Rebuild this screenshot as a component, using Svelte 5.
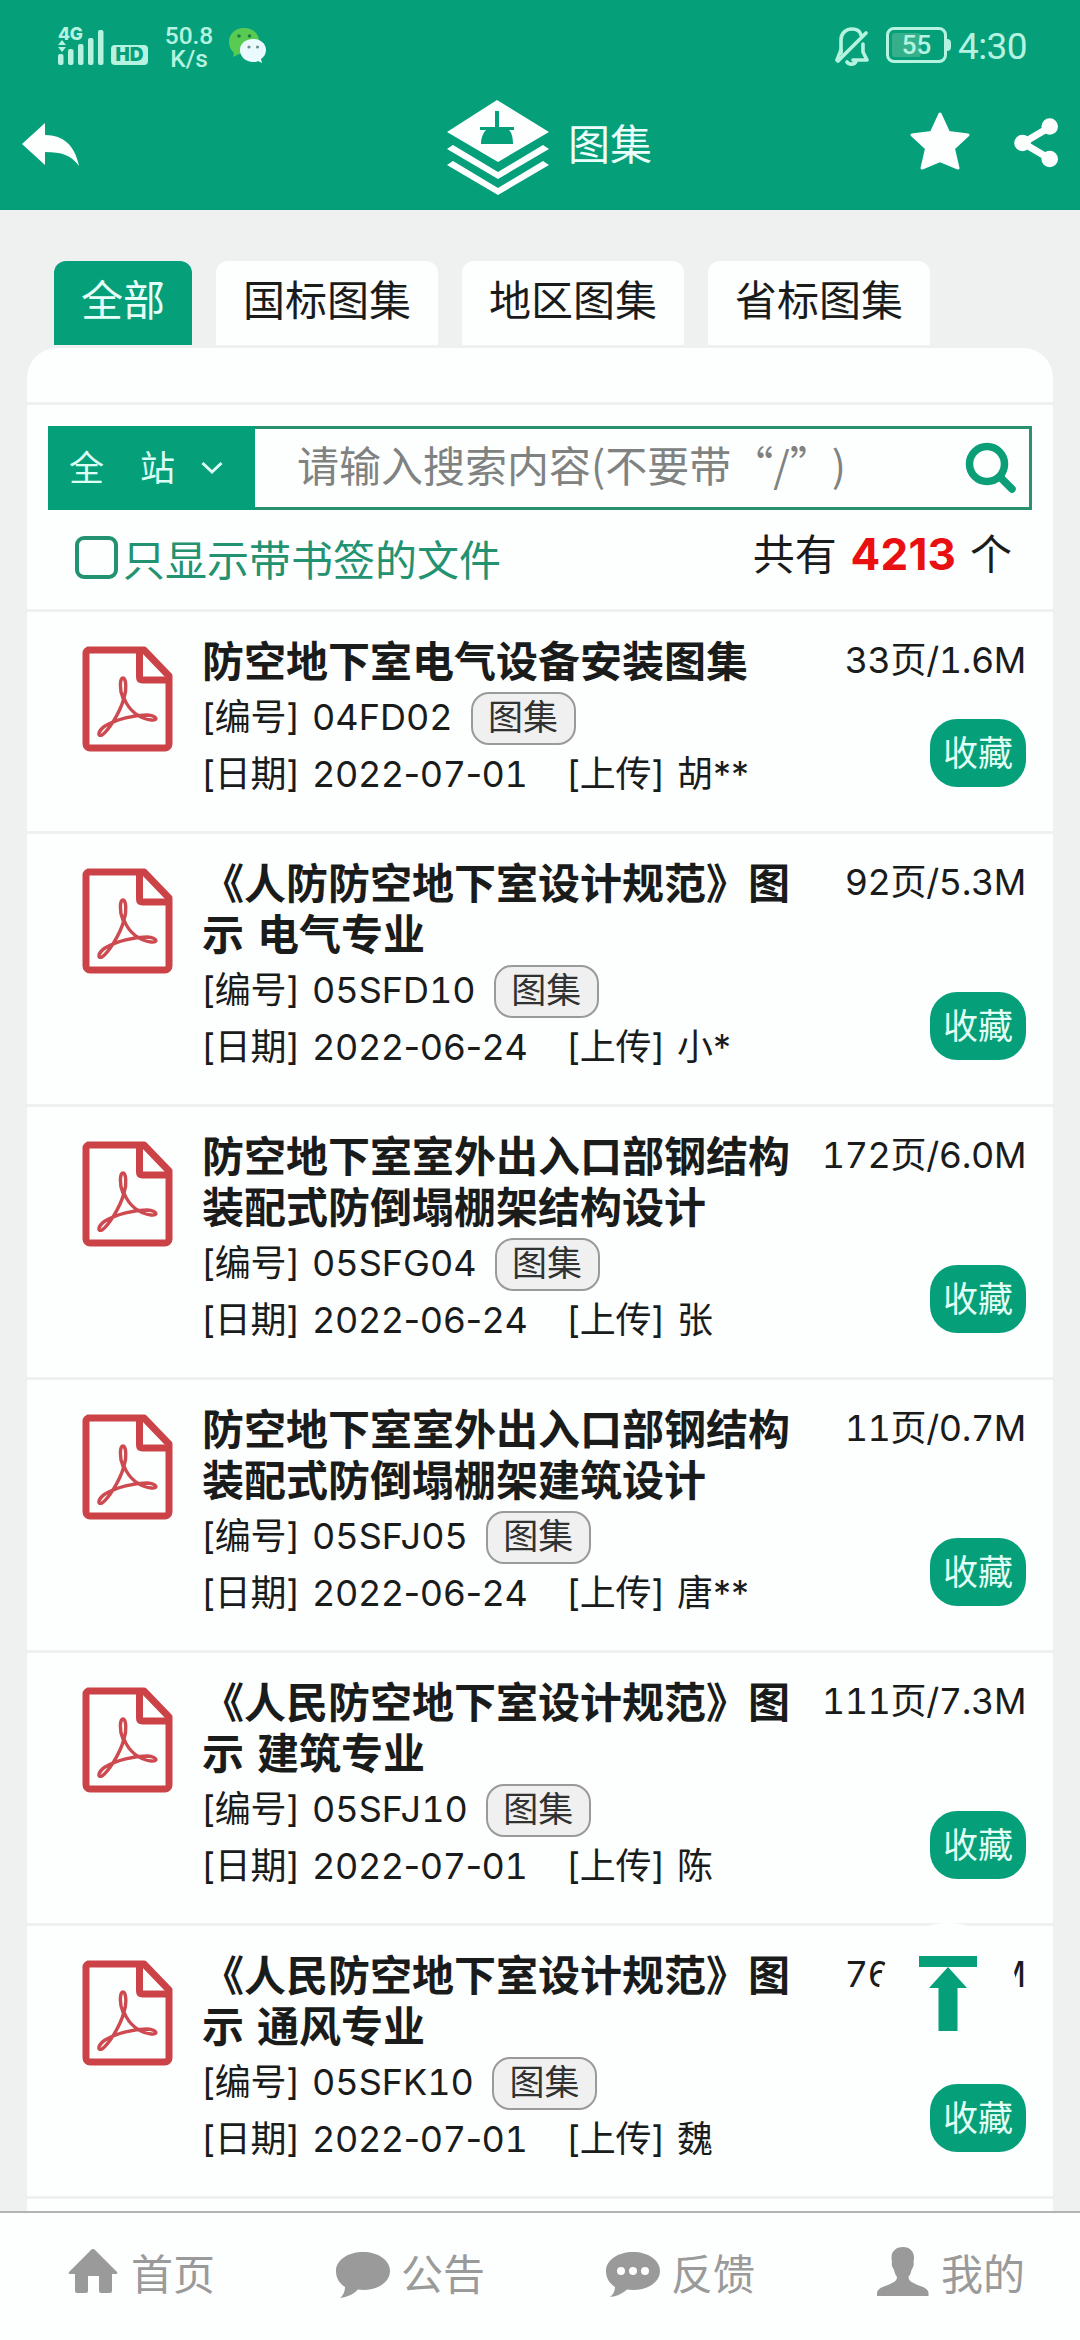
<script>
  const tabs = ['全部', '国标图集', '地区图集', '省标图集'];
  const docs = [
    { title: '防空地下室电气设备安装图集', code: '04FD02', date: '2022-07-01', by: '胡**', meta: '33页/1.6M' },
    { title: '《人防防空地下室设计规范》图示 电气专业', code: '05SFD10', date: '2022-06-24', by: '小*', meta: '92页/5.3M' },
    { title: '防空地下室室外出入口部钢结构装配式防倒塌棚架结构设计', code: '05SFG04', date: '2022-06-24', by: '张', meta: '172页/6.0M' },
    { title: '防空地下室室外出入口部钢结构装配式防倒塌棚架建筑设计', code: '05SFJ05', date: '2022-06-24', by: '唐**', meta: '11页/0.7M' },
    { title: '《人民防空地下室设计规范》图示 建筑专业', code: '05SFJ10', date: '2022-07-01', by: '陈', meta: '111页/7.3M' },
    { title: '《人民防空地下室设计规范》图示 通风专业', code: '05SFK10', date: '2022-07-01', by: '魏', meta: '76页/5.1M' }
  ];
</script>

<div class="app" lang="zh-CN">
  <header>
    <div class="status">
      <div class="signal">
        <span class="gen">4G</span>
        <svg width="46" height="39" viewBox="0 0 46 39">
          <path d="M4 14l4 5H0zM0 21h8l-4 5z" />
          <rect x="0" y="28" width="5.5" height="11" rx="2" />
          <rect x="10" y="23" width="5.5" height="16" rx="2" />
          <rect x="20" y="18" width="5.5" height="21" rx="2" />
          <rect x="30" y="12" width="5.5" height="27" rx="2" />
          <rect x="40" y="4" width="5.5" height="35" rx="2" />
        </svg>
      </div>
      <span class="hd">HD</span>
      <div class="speed">50.8<br />K/s</div>
      <svg class="wechat" width="38" height="37" viewBox="0 0 38 37">
        <path fill="#58cb52" d="M16 1C7 1 1 7 1 15c0 5 2 8 5 11l-1 4 6-3c10 2 20-2 20-13C31 6 24 1 16 1z" />
        <path fill="#eafaff" d="M25 12c-8 0-13 5-13 11 0 7 6 12 13 12 2 0 4 0 5-1l4 2-1-4c3-2 5-5 5-9 0-6-5-11-13-11z" />
        <g fill="#217a43"><circle cx="11" cy="9" r="1.8" /><circle cx="21.500" cy="9" r="1.8" /></g>
        <g fill="#6f8f95"><circle cx="21" cy="20" r="1.6" /><circle cx="29.500" cy="20" r="1.6" /></g>
      </svg>
      <span class="grow"></span>
      <svg class="bell" width="34" height="40" viewBox="0 0 34 40">
        <path d="M3 35L31 7M6 27V14C6 7 11 3 17 3c5 0 8 2 9 6M28 18v8l4 8H18" />
        <path d="M6 24l-4 10" />
        <path d="M12 36c2 3 8 3 9-1" />
      </svg>
      <div class="battery"><i></i><b>55</b></div>
      <span class="time">4:30</span>
    </div>
    <div class="bar">
      <svg class="back" width="58" height="44" viewBox="0 0 58 44"><path d="M0 21L23 0v12c19 0 30 11 34 31-8-11-17-14-34-14v13z" /></svg>
      <div class="brand">
        <svg width="102" height="96" viewBox="0 0 102 96">
          <path d="M50 0l52 32-51 30L0 32z" />
          <path d="M0 49l6-4 45 27 45-27 6 4-51 30zM0 65l6-4 45 27 45-27 6 4-51 30z" />
          <path class="lamp" d="M48 11h4v16h15v3h-5c3 3 4 8 4 14H34c0-6 2-11 5-14h-6v-3h15z" />
        </svg>
        <h1>图集</h1>
      </div>
      <svg class="star" width="60" height="60" viewBox="0 0 60 60"><path d="M30 3l8.500 18.500L58 24 43.500 37.500 48 57 30 49.500 12 57l4.500-19.500L2 24l19.500-2.500z" /></svg>
      <svg class="share" width="44" height="52" viewBox="0 0 44 52">
        <path d="M36 10L9 26l27 16" /><circle cx="35.700" cy="9.500" r="8.300" /><circle cx="8.500" cy="26" r="8.300" /><circle cx="35.700" cy="42" r="8.300" />
      </svg>
    </div>
  </header>

  <main>
    <nav class="tabs">
      {#each tabs as tab, i}<button class:active={i === 0}>{tab}</button>{/each}
    </nav>
    <section class="panel">
      <div class="cap"></div>
      <div class="tools">
        <div class="search">
          <div class="scope">
            <span>全</span><span>站</span>
            <svg width="22" height="14" viewBox="0 0 22 14"><path d="M1.500 2L11 11l9.500-9" /></svg>
          </div>
          <input placeholder="请输入搜索内容(不要带“/”)" />
          <svg class="find" width="52" height="52" viewBox="0 0 52 52"><circle cx="22" cy="22" r="17.500" /><path d="M35 35l12 12" /></svg>
        </div>
        <div class="filter">
          <label><i></i><span>只显示带书签的文件</span></label>
          <p>共有 <b>4213</b> 个</p>
        </div>
      </div>
      {#each docs as doc}
        <article>
          <svg class="pdf" width="92" height="106" viewBox="0 0 92 106">
            <path class="sheet" d="M5 4h57l25 26v68a4 4 0 0 1-4 4H8a4 4 0 0 1-4-4V7a3 3 0 0 1 3-3" />
            <path class="sheet" d="M57.500 4v27q0 3 3 3H88" />
            <path class="swirl" d="M41 52c-4-9-3-20 0-20s4 11 1 20C38 67 26 85 20 89c-5 2-4-4 3-9 12-7 29-11 42-11 11 1 11 6 4 5-11-1-22-9-27-22z" />
          </svg>
          <div class="body">
            <h2>{doc.title}</h2>
            <div class="line"><span class="key">[编号]</span><span class="num">{doc.code}</span><em>图集</em></div>
            <div class="line"><span class="key">[日期]</span><span class="num date">{#each doc.date.split('-') as part, i}{#if i}<s>-</s>{/if}{part}{/each}</span><span class="key">[上传]</span><span>{doc.by}</span></div>
          </div>
          <div class="side"><span class="num">{doc.meta}</span><button>收藏</button></div>
        </article>
      {/each}
    </section>
    <div class="top">
      <svg width="58" height="76" viewBox="0 0 58 76"><path d="M0 0h58v11H0zM29 11l19 21h-9.500v43h-19V32H10z" /></svg>
    </div>
  </main>

  <footer>
    <div><svg viewBox="0 0 54 54"><path d="M27 5q2 0 3 2l21 21q1 2-1 2h-4v17q0 2-2 2H35q-2 0-2-2V32H22v15q0 2-2 2h-9q-2 0-2-2V30H4q-2 0-1-2L24 7q1-2 3-2z" /></svg><span>首页</span></div>
    <div><svg viewBox="0 0 54 54"><path d="M27 8c15 0 27 8 27 19s-12 19-27 19l-5-.5Q15 53 4 54q5-4 5-11C3 39 0 34 0 27 0 16 12 8 27 8z" /></svg><span>公告</span></div>
    <div><svg viewBox="0 0 54 54"><path d="M27 8c15 0 27 8 27 19s-12 19-27 19l-6-.5Q14 52 4 53q5-4 5-10C3 39 0 34 0 27 0 16 12 8 27 8z" /><g fill="#fdfefe"><circle cx="15" cy="27" r="4" /><circle cx="27" cy="27" r="4" /><circle cx="39" cy="27" r="4" /></g></svg><span>反馈</span></div>
    <div><svg viewBox="0 0 54 54"><path d="M27 3c7 0 11 5 11 10q0 3-.5 5c1 4-1 6-2 8q-1 5-3 7c0 4 3 5 9 8q11 3 11 8v3H1v-3q0-5 11-8c6-3 9-4 9-8q-2-2-3-7c-1-2-3-4-2-8q-.5-2-.5-5c0-5 4-10 11.500-10z" /></svg><span>我的</span></div>
  </footer>
</div>

<style>
  :global(body) { margin: 0; background: #eff0f0; }
  .app {
    width: 1080px; height: 2340px; display: flex; flex-direction: column; overflow: hidden;
    font-family: Inter, 'Noto Sans CJK SC', sans-serif; color: #1a1c1b; background: #eff0f0;
  }
  .app * { box-sizing: border-box; }
  svg { display: block; flex: none; }
  button { border: 0; padding: 0; font: inherit; }
  h1, h2, p { margin: 0; }

  header { height: 210px; background: #05a07a; flex: none; }
  .status { height: 88px; padding: 0 54px 0 58px; display: flex; align-items: flex-start; font-family: Roboto, sans-serif; color: #b5f3e0; }
  .signal { position: relative; margin-top: 26px; fill: #b5f3e0; }
  .gen { position: absolute; left: 0; top: 1px; font: 800 17.500px/14px Inter, sans-serif; letter-spacing: -.2px; }
  .hd { margin: 45px 0 0 7px; width: 37px; height: 20px; border-radius: 4px; background: #b5f3e0; color: #05a07a; font: 900 19px/20px Inter, sans-serif; text-align: center; }
  .speed { margin: 24px 0 0 16px; width: 50px; text-align: center; white-space: nowrap; font-size: 24.500px; font-weight: 500; line-height: 23px; }
  .wechat { margin: 27px 0 0 14px; }
  .grow { flex: 1; }
  .bell { margin: 26px 17px 0 0; fill: none; stroke: #b5f3e0; stroke-width: 3.600; stroke-linecap: round; stroke-linejoin: round; }
  .battery { position: relative; margin-top: 27px; width: 61px; height: 36px; border: 3px solid #b5f3e0; border-radius: 8px; display: flex; align-items: center; justify-content: center; }
  .battery::after { content: ''; position: absolute; right: -7px; top: 9px; width: 4px; height: 12px; border-radius: 0 6px 6px 0; background: #b5f3e0; }
  .battery i { position: absolute; left: 3px; top: 3px; width: 29px; height: 24px; border-radius: 3px; background: #35b08b; }
  .battery b { position: relative; font-size: 26px; font-weight: 500; }
  .time { margin: 25px 0 0 11px; font-size: 37px; line-height: 44px; width: 68px; white-space: nowrap; letter-spacing: -.6px; }
  .bar { height: 122px; padding: 0 22px; display: grid; grid-template-columns: 425px 463px 60px 1fr; align-items: start; fill: #fdffff; }
  .back { margin-top: 35px; }
  .brand { display: flex; gap: 19px; align-items: flex-start; padding-top: 12px; }
  .brand .lamp { fill: #05a07a; }
  h1 { color: #eafffb; font-size: 42px; line-height: 60px; font-weight: 400; margin-top: 15px; }
  .star { margin-top: 23px; stroke: #fdffff; stroke-width: 3; stroke-linejoin: round; }
  .share { margin-top: 29px; justify-self: end; }
  .share path { fill: none; stroke: #fdffff; stroke-width: 7; }

  main { position: relative; flex: 1; overflow: hidden; padding: 51px 27px 0; display: flex; flex-direction: column; }
  .tabs { display: flex; flex: none; gap: 24px; padding-left: 27px; height: 84px; }
  .tabs button { padding: 0 27px 6px; border-radius: 12px 12px 0 0; background: #fdfefe; color: #1a1c1b; font-size: 42px; line-height: 79px; }
  .tabs .active { background: #05a07a; color: #e6fff8; }
  .panel { flex: 1; margin-top: 3px; background: #fdfefe; border-radius: 30px 30px 0 0; }
  .cap { height: 57px; border-bottom: 3px solid #eff0f0; }
  .tools { height: 207px; padding: 21px 21px 0; border-bottom: 3px solid #eff0f0; }
  .search { height: 84px; border: 3px solid #2a916f; display: flex; align-items: center; padding-right: 12px; }
  .scope { align-self: stretch; margin: -3px 0 -3px -3px; width: 207px; background: #05a07a; color: #dcfff6; font-size: 35px; display: flex; align-items: center; padding-left: 21px; padding-bottom: 6px; }
  .scope span + span { margin-left: 36px; }
  .scope svg { margin-left: 26px; margin-top: 5px; fill: none; stroke: #dcfff6; stroke-width: 3; }
  input { flex: 1; min-width: 0; border: 0; outline: 0; background: none; padding: 0 0 9px 42px; font-family: 'Noto Sans CJK SC', sans-serif; font-size: 42px; height: 74px; text-spacing-trim: space-all; }
  input::placeholder { color: #808281; opacity: 1; text-spacing-trim: space-all; }
  .find { fill: none; stroke: #0b9f77; stroke-width: 7.500; stroke-linecap: round; }
  .filter { display: flex; justify-content: space-between; padding: 0 20px 0 27px; height: 96px; font-size: 42px; }
  .filter label { display: flex; align-items: center; gap: 5px; height: 96px; line-height: 60px; padding-bottom: 1px; color: #239270; }
  .filter label span { padding-top: 6px; }
  .filter i { width: 43px; height: 43px; border: 4px solid #239270; border-radius: 9px; }
  .filter p { height: 88px; line-height: 88px; white-space: pre; word-spacing: 2px; }
  .filter b { color: #e81010; font-size: 44px; letter-spacing: .2px; }

  article { display: flex; padding: 24px 27px 27px 55px; border-bottom: 3px solid #eff0f0; }
  .pdf { margin-top: 10px; }
  .sheet { fill: none; stroke: #cb4347; stroke-width: 7; stroke-linejoin: round; }
  .swirl { fill: none; stroke: #cc4a50; stroke-width: 3.400; }
  .body { width: 597px; margin-left: 28px; padding-right: 6px; }
  h2 { font-size: 42px; line-height: 51px; font-weight: 700; margin-bottom: 3px; width: 590px; word-spacing: 3px; }
  .line { height: 57px; display: flex; align-items: center; font-size: 36px; line-height: 55px; padding-bottom: 2px; white-space: nowrap; }
  .num { font-variant-numeric: tabular-nums; }
  .key { width: 110px; letter-spacing: -.3px; }
  .date { width: 255px; letter-spacing: -.4px; }
  s { text-decoration: none; margin: 0 -3.500px; }
  .line em { margin: 2px 0 0 18px; height: 53px; width: 105px; border: 2px solid #9a9a9a; border-radius: 18px; background: #f0f0f0; color: #303131; font-style: normal; font-size: 35px; line-height: 46px; text-align: center; }
  .side { flex: 1; display: flex; flex-direction: column; justify-content: space-between; align-items: flex-end; font-size: 36px; line-height: 48px; white-space: nowrap; }
  .side .num { letter-spacing: -.4px; }
  .side button { width: 96px; height: 68px; margin-bottom: 17px; border-radius: 27px; background: #05a07a; color: #e2fff6; font-size: 35px; line-height: 65px; }
  .top { position: absolute; left: 879px; top: 1713px; width: 138px; height: 138px; border-radius: 50%; background: #fdfefe; padding: 33px 40px; fill: #05a07a; }

  footer { flex: none; height: 129px; border-top: 2px solid #b3b3b3; background: #fdfefe; display: grid; grid-template-columns: repeat(4, 270px); color: #9a9a9a; font-size: 42px; }
  footer div { display: flex; gap: 11px; padding: 31px 0 0 66px; }
  footer svg { width: 54px; height: 54px; fill: #9a9a9a; }
  footer span { line-height: 62px; }
</style>
